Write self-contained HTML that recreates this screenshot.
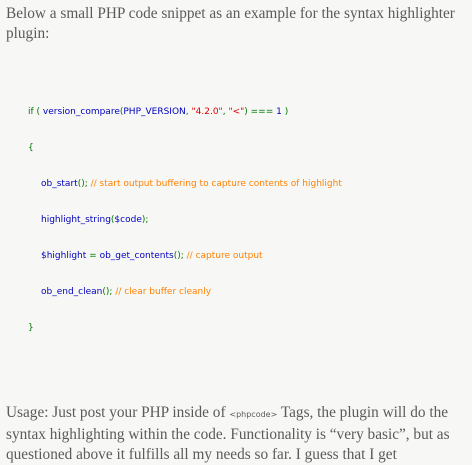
<!DOCTYPE html>
<html><head><meta charset="utf-8"><style>
html,body{margin:0;padding:0;background:#f7f8f6;width:472px;height:448px;overflow:hidden}
.p{position:absolute;left:6px;font-family:"Liberation Serif",serif;font-size:15.3px;color:#5a5a5a;line-height:20px;white-space:nowrap}
.c{position:absolute;font-family:"DejaVu Sans","Liberation Sans",sans-serif;font-size:9px;white-space:nowrap;line-height:10px;color:#0000bb}
.g{color:#007700}.r{color:#dd0000}.o{color:#ff8000}
.t{font-family:"DejaVu Sans",sans-serif;font-size:8px}
</style></head><body>
<div class="p" style="top:4px">Below a small PHP code snippet as an example for the syntax highlighter<br>plugin:</div>
<div class="c" style="left:28px;top:107px"><span class="g">if ( </span>version_compare<span class="g">(</span>PHP_VERSION<span class="g">, </span><span class="r">"4.2.0"</span><span class="g">, </span><span class="r">"&lt;"</span><span class="g">) === </span>1 <span class="g">)</span></div>
<div class="c g" style="left:28px;top:143px">{</div>
<div class="c" style="left:41px;top:179px">ob_start<span class="g">(); </span><span class="o">// start output buffering to capture contents of highlight</span></div>
<div class="c" style="left:41px;top:215px">highlight_string<span class="g">(</span>$code<span class="g">);</span></div>
<div class="c" style="left:41px;top:251px">$highlight <span class="g">= </span>ob_get_contents<span class="g">(); </span><span class="o">// capture output</span></div>
<div class="c" style="left:41px;top:287px">ob_end_clean<span class="g">(); </span><span class="o">// clear buffer cleanly</span></div>
<div class="c g" style="left:28px;top:323px">}</div>
<div class="p" style="top:403px">Usage: Just post your PHP inside of <span class="t">&lt;phpcode&gt;</span> Tags, the plugin will do the<br>syntax highlighting within the code. Functionality is “very basic”, but as<br>questioned above it fulfills all my needs so far. I guess that I get</div>
</body></html>
